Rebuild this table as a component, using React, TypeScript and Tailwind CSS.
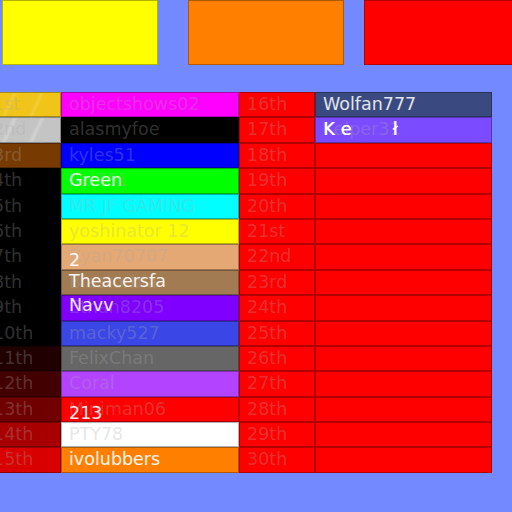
const rows = [
  { rank: "1st", rankBg: "bg-[linear-gradient(115deg,#f0c419_0%,#f0c419_30%,#f3cc38_34%,#f0c419_38%,#f0c419_62%,#f3cc38_66%,#f0c419_70%)]", name: "objectshows02", nameBg: "bg-[#ff00ff]" },
  { rank: "2nd", rankBg: "bg-[linear-gradient(115deg,#c4c4c4_0%,#c4c4c4_30%,#d2d2d2_34%,#c4c4c4_38%,#c4c4c4_62%,#d2d2d2_66%,#c4c4c4_70%)]", name: "alasmyfoe", nameBg: "bg-black" },
  { rank: "3rd", rankBg: "bg-[#773a00]", name: "kyles51", nameBg: "bg-[#0000ff]" },
  { rank: "4th", rankBg: "bg-black", name: "jkd781", nameBg: "bg-[#00ff00]" },
  { rank: "5th", rankBg: "bg-black", name: "MR JF GAMING", nameBg: "bg-[#00ffff]" },
  { rank: "6th", rankBg: "bg-black", name: "yoshinator 12", nameBg: "bg-[#ffff00]" },
  { rank: "7th", rankBg: "bg-black", name: "Ryan70707", nameBg: "bg-[#e4a874]" },
  { rank: "8th", rankBg: "bg-black", name: "Blastorbia", nameBg: "bg-[#a37b52]" },
  { rank: "9th", rankBg: "bg-black", name: "Ethan8205", nameBg: "bg-[#7f00ff]" },
  { rank: "10th", rankBg: "bg-black", name: "macky527", nameBg: "bg-[#3a46e6]" },
  { rank: "11th", rankBg: "bg-[#200000]", name: "FelixChan", nameBg: "bg-[#666666]" },
  { rank: "12th", rankBg: "bg-[#420000]", name: "Coral", nameBg: "bg-[#b443ff]" },
  { rank: "13th", rankBg: "bg-[#700000]", name: "Miniman06", nameBg: "bg-[#ff0000]" },
  { rank: "14th", rankBg: "bg-[#a80000]", name: "PTY78", nameBg: "bg-white" },
  { rank: "15th", rankBg: "bg-[#d80000]", name: "ivolubbers", nameBg: "bg-[#ff8000]" },
];

// names drawn over the faded usernames
const overlays: Record<number, { text: string; cls: string }> = {
  3: { text: "Green", cls: "top-0" },
  6: { text: "2", cls: "top-[4px]" },
  7: { text: "Theacersfa", cls: "top-[-1px]" },
  8: { text: "Navv", cls: "top-[-2px]" },
  12: { text: "213", cls: "top-[4px]" },
  14: { text: "ivolubbers", cls: "top-0" },
};

const right = [
  { rank: "16th", name: "Wolfan777", bg: "bg-[#3a4a80]" },
  { rank: "17th", name: "Kelper31", bg: "bg-[#7b4bff]" },
  ...["18th", "19th", "20th", "21st", "22nd", "23rd", "24th", "25th", "26th", "27th", "28th", "29th", "30th"].map((r) => ({ rank: r, name: "", bg: "bg-[#ff0000]" })),
];

const cell = "relative h-[25.4px] border border-black/30 pl-[7px] leading-[23.4px] whitespace-nowrap overflow-hidden";
const faded = "text-[#aaaaaa]/30";

export default function App() {
  return (
    <div className="w-[512px] h-[512px] overflow-hidden bg-[#7389ff] font-['DejaVu_Sans',sans-serif] text-[17.5px]">
      <div className="flex pl-[2px] gap-[30px]">
        <div className="shrink-0 w-[156px] h-[65px] bg-[#ffff00] border border-black/30" />
        <div className="shrink-0 flex gap-[20px]">
          <div className="shrink-0 w-[156px] h-[65px] bg-[#ff8000] border border-black/30" />
          <div className="shrink-0 w-[200px] h-[65px] bg-[#ff0000] border border-black/30" />
        </div>
      </div>

      <div className="mt-[27px] ml-[-15px] grid grid-cols-[76px_178px_76px_177px]">
        {rows.map((r, i) => (
          <div key={r.rank} className="contents">
            <div className={`${cell} ${r.rankBg} ${faded}`}>{r.rank}</div>
            <div className={`${cell} ${r.nameBg} ${faded}`}>
              {r.name}
              {overlays[i] && (
                <span className={`absolute left-[7px] text-white/90 ${overlays[i].cls}`}>{overlays[i].text}</span>
              )}
            </div>
            <div className={`${cell} bg-[#ff0000] ${faded}`}>{right[i].rank}</div>
            <div className={`${cell} ${right[i].bg} ${i === 0 ? "text-white/85 border-black" : faded}`}>
              {right[i].name}
              {i === 1 && (
                <span className="absolute left-[7px] top-0 text-white/90 tracking-[7px] [text-shadow:0.5px_0_0_white]">
                  Ke<span className="ml-[34px]">ł</span>
                </span>
              )}
            </div>
          </div>
        ))}
      </div>
    </div>
  );
}
